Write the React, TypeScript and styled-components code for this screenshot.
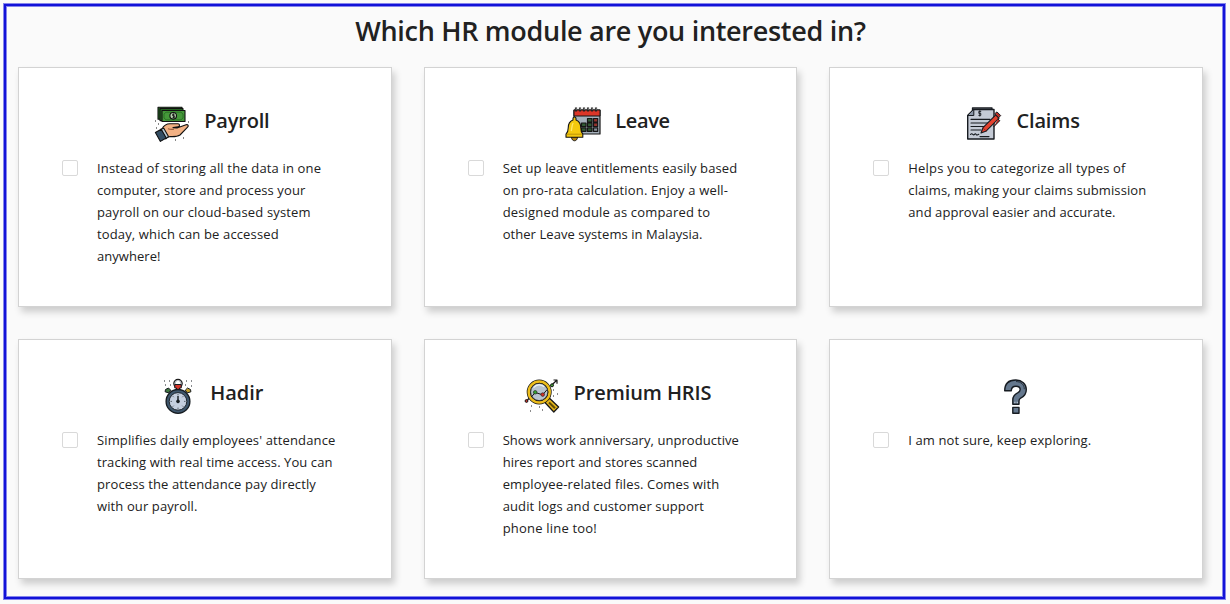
import React from "react";
import styled, { createGlobalStyle } from "styled-components";

const GlobalStyle = createGlobalStyle`
  * { box-sizing: border-box; }
  body { margin: 0; background: #fafafa; }
`;

const Page = styled.main`
  height: 604px;
  padding: 3px 4px 4px 3px;
  background: #fafafa;
  color: #212121;
  font-family: "Segoe UI", "Open Sans", "Noto Sans", sans-serif;
`;

const Frame = styled.section`
  height: 597px;
  border: 1px solid #8585ec;
  box-shadow: inset 0 0 0 2px #1212d8, inset 0 0 0 3px #8585ec;
  padding: 0 22px 0 14px;
`;

const Title = styled.h1`
  margin: 0;
  height: 63px;
  padding-top: 8px;
  text-align: center;
  font-size: 27px;
  line-height: 38px;
  font-weight: 600;
  letter-spacing: -0.3px;
`;

const Grid = styled.div`
  display: grid;
  grid-template-columns: repeat(3, 1fr);
  grid-auto-rows: 240px;
  gap: 32px;
`;

const Card = styled.article`
  background: #fff;
  border: 1px solid #d3d3d3;
  box-shadow: 3px 5px 7px rgba(0, 0, 0, 0.18);
  padding: 38px 43px 0;
`;

const CardHeader = styled.header`
  display: flex;
  justify-content: center;
  height: 51px;
  padding-left: 14px;
  gap: 14px;

  svg { width: 36px; height: 36px; flex: none; }
`;

const CardTitle = styled.h2<{ $spacing: number }>`
  margin: 0;
  padding-top: 1px;
  font-size: 20px;
  line-height: 28px;
  font-weight: 600;
  letter-spacing: ${(p) => p.$spacing}px;
`;

const Option = styled.label`
  display: flex;
  gap: 19px;
`;

const Checkbox = styled.input`
  appearance: none;
  flex: none;
  width: 16px;
  height: 16px;
  margin: 3px 0 0;
  background: #fff;
  border: 1px solid #d9d9d9;
  border-radius: 2px;
`;

const Description = styled.span`
  display: block;
  font-size: 13px;
  line-height: 22px;
`;

const Line = styled.span<{ $spacing: number }>`
  display: block;
  white-space: nowrap;
  letter-spacing: ${(p) => p.$spacing}px;
`;

const PayrollIcon = () => (
  <svg viewBox="0 0 36 36" stroke="#111" strokeWidth="1.1" strokeLinejoin="round">
    <path d="M4 1.2h24v3H7v9H4z" fill="#236b20" />
    <path d="M6 2.6h23v3H9v9H6z" fill="#2c7d27" />
    <path d="M8 4.5h23v11H8z" fill="#45983a" />
    <path d="M10 8l2-1.8h15L29 8v4l-2 1.8H12L10 12z" fill="none" stroke="#266b21" strokeWidth=".8" />
    <circle cx="19.2" cy="9.8" r="3.3" fill="#b7d3ae" />
    <path d="M20.6 8.2h-2v1.6h2v1.7h-2M19.5 7.5v4.8" fill="none" strokeWidth=".8" />
    <path d="M8 23c2-4 5-5.2 8-5.2h8c2 0 2 2.8 0 3l-5 .8 4 .4 9-3.2c2-.7 3 1 1.6 2.4L26 29c-3 2-7 1.7-10 1.6L12.2 32z" fill="#f2b184" />
    <path d="M14 22.7c2 .8 4 .8 6 .6" fill="none" stroke="#995b3b" />
    <path d="M6.8 23.2l3-1 4.7 8.2-2.7 2.4z" fill="#b8c9d4" />
    <path d="M1.4 26.4l5.8-3.2 5 8.8-5.8 3.4z" fill="#344e64" />
    <path d="M1 15h1M2 22h1M34 16h1M21 34h1M29 32h1M4 18h1" />
  </svg>
);

const LeaveIcon = () => (
  <svg viewBox="0 0 36 36" stroke="#151515" strokeLinejoin="round">
    <path d="M9 4h26v24H9z" fill="#a5b0bb" strokeWidth="1.2" />
    <path d="M9 4h26v6H9z" fill="#dc3628" strokeWidth="1" />
    <path d="M11 1.4v4M15 1.4v4M19 1.4v4M23 1.4v4M27 1.4v4M31 1.4v4" stroke="#222" strokeWidth="2.2" />
    <path d="M11.2 2v2M15.2 2v2M19.2 2v2M23.2 2v2M27.2 2v2M31.2 2v2" stroke="#aaa" strokeWidth=".7" />
    <g strokeWidth="1.2">
      <path d="M22.5 12.5H27v3.7h-4.5zM16.5 17H21v3.5h-4.5zM22.5 17H27v3.5h-4.5zM16.5 21.8H21v3.5h-4.5zM22.5 21.8H27v3.5h-4.5z" fill="#315b35" />
      <path d="M28.5 12.5h4.2v3.7h-4.2zM28.5 17h4.2v3.5h-4.2z" fill="#93332d" />
      <path d="M28.5 21.8h4.2v3.5h-4.2z" fill="#879199" />
    </g>
    <path d="M6.5 31c0 5 6 5 6 0z" fill="#b7830d" />
    <path d="M8 14v-1.6c0-1.8 3-1.8 3 0V14c3.8 1.4 4.8 4.8 4.8 8 0 3 .5 4.5 2 6.2v3H1v-3C2.7 26.5 3.2 25 3.2 22c0-3.5 1-6.7 4.8-8z" fill="#f4c90e" strokeWidth="1.1" />
    <path d="M6.2 25c.8-2 .4-5.6 2-8" fill="none" stroke="#ffe76b" strokeWidth="1.3" />
    <path d="M2 28.2h14.8" stroke="#a87d06" strokeWidth=".7" />
  </svg>
);

const ClaimsIcon = () => (
  <svg viewBox="0 0 36 36" fill="none" stroke="#171b20" strokeLinecap="round" strokeLinejoin="round">
    <path d="M6.5 2H26v27H6.5z" fill="#b9c0cc" strokeWidth="1.3" />
    <path d="M7.8 3.5H28V33H1.7V9.5z" fill="#c4cad5" strokeWidth="1.4" />
    <path d="M7.8 3.5v6H1.7z" fill="#8994a5" />
    <path d="M5 13.4h19M5 17h18M5 20.5h15M5 24h10" strokeWidth="1.1" />
    <path d="M14.8 5.4h-2v2h2v2h-2M13.8 4.6v5.5" strokeWidth=".9" />
    <path d="M4.5 28.5c2-2.5 2.5 2 4.2-.3 1.1-1.4 1.4 1.6 2.6.7l1.5-.6M14 30.6h9" strokeWidth="1.1" />
    <path d="M15 27l2-5.3L29.8 8.8l3.3 3.3-12.8 12.8z" fill="#e4412e" strokeWidth="1.1" />
    <path d="M29 7.5l2-1.6 3.7 3.7-2 2zM32 13l1.8 1.7-6 6" fill="#b92d25" />
    <path d="M17 22l3.2 3" stroke="#9c211e" strokeWidth=".9" />
  </svg>
);

const StopwatchIcon = () => (
  <svg viewBox="0 0 36 36" fill="none" stroke="#151b20" strokeLinejoin="round">
    <path d="M5.5 11.5l3-1.5 2.2 2.2-2 2.7-3.6-1.1z" fill="#3e7540" />
    <path d="M30.5 11.5l-3-1.5-2.2 2.2 2 2.7 3.6-1.1z" fill="#c19e2b" />
    <circle cx="18" cy="5.6" r="3.8" stroke="#171717" strokeWidth="2" />
    <circle cx="18" cy="5.6" r="3.3" stroke="#c5cbd2" strokeWidth="1" />
    <path d="M14.8 6.5h6.4V10h-1.7v3h-3v-3h-1.7z" fill="#d9362b" />
    <circle cx="18" cy="23.4" r="11.9" fill="#3e566c" strokeWidth="1.3" />
    <circle cx="18" cy="23.4" r="8.8" fill="#c4cfdf" strokeWidth=".9" />
    <path d="M18 16v1.4M18 29.6v1.5M10.5 23.4H12M24 23.4h1.5M12.8 18.2l1 1M22.3 27.7l1 1M23.3 18.2l-1 1M13.7 27.7l-1 1" strokeWidth=".6" />
    <path d="M18 18v5.2" strokeWidth="1.4" />
    <circle cx="18" cy="23.4" r="1.4" fill="#151b20" />
    <path d="M4 3h1M9 3h1M26 3h1M31 3h1M5 7h1M31 8h1M10 7h1M25 7h1" />
  </svg>
);

const SearchIcon = () => (
  <svg viewBox="0 0 36 36" fill="none" stroke="#181818" strokeLinejoin="round">
    <path d="M26.5 8.2L33 2M29.5 2H33v3.7M2.5 23l3.4-3.5" strokeWidth="1.2" />
    <circle cx="28" cy="7.3" r="1.5" fill="#42a439" />
    <circle cx="2.5" cy="23" r="1.4" fill="#c9342d" />
    <path d="M23 21l2.5-.7L34.6 29l-4.8 5-8.6-9.2z" fill="#e5b51b" strokeWidth="1.3" />
    <path d="M25 24.5l6 5.8" stroke="#604c08" strokeWidth="2.1" />
    <circle cx="15.2" cy="14" r="10.5" stroke="#181818" strokeWidth="4" />
    <circle cx="15.2" cy="14" r="10.5" stroke="#edbd1c" strokeWidth="2.5" />
    <circle cx="15.2" cy="14" r="8.6" fill="#b8c4d0" strokeWidth=".8" />
    <path d="M9.5 9.7c3-3.7 7-3.6 10.7-1.1" stroke="#e7eef4" strokeWidth="1.3" />
    <path d="M7.5 18.8l3.7-4.3 7.5 2.3 4.2-5" strokeWidth="1" />
    <circle cx="11.2" cy="14.3" r="1.8" fill="#36a32f" strokeWidth=".6" />
    <circle cx="18.7" cy="16.6" r="1.8" fill="#d63329" strokeWidth=".6" />
    <path d="M29 12h1M33 16h1M29 18h1M15 29h1M7 28h1M6 33h1M18 32h1" />
  </svg>
);

const QuestionIcon = () => (
  <svg viewBox="0 0 36 36" stroke="#171c22" strokeWidth="1.4" strokeLinejoin="round">
    <path d="M6.7 12.8C6.7 5.7 11 2 17.6 2c6.4 0 10.7 4 10.7 9.5 0 4.5-2.1 7-5.6 8.7-1.2.6-1.7 1.4-1.7 2.8v3.3h-6.2V22c0-3.8 1.8-5.8 4.8-7.2 1.8-.9 2.6-1.8 2.6-3.3 0-2-1.7-3.2-4.2-3.2-3 0-4.7 1.6-4.7 4.5z" fill="#65788e" />
    <path d="M14.8 29.4H21v5.8h-6.2z" fill="#65788e" />
    <path d="M18 3.5c5 .2 8.3 3.3 8.3 7.7" fill="none" stroke="#29343f" strokeWidth="1" />
    <path d="M16.5 24.5h.8M18.8 24.5h.8" stroke="#e1e8ef" strokeWidth="1.3" />
  </svg>
);

type Module = {
  title: string;
  titleSpacing: number;
  icon: React.ReactNode;
  lines: [string, number][];
};

const modules: Module[] = [
  {
    title: "Payroll", titleSpacing: -0.2, icon: <PayrollIcon />,
    lines: [["Instead of storing all the data in one", 0.16], ["computer, store and process your", 0.1], ["payroll on our cloud-based system", 0.15], ["today, which can be accessed", 0.14], ["anywhere!", 0.05]],
  },
  {
    title: "Leave", titleSpacing: -0.3, icon: <LeaveIcon />,
    lines: [["Set up leave entitlements easily based", 0.11], ["on pro-rata calculation. Enjoy a well-", 0.17], ["designed module as compared to", 0.17], ["other Leave systems in Malaysia.", 0.06]],
  },
  {
    title: "Claims", titleSpacing: -0.15, icon: <ClaimsIcon />,
    lines: [["Helps you to categorize all types of", 0.2], ["claims, making your claims submission", 0.1], ["and approval easier and accurate.", 0.06]],
  },
  {
    title: "Hadir", titleSpacing: 0, icon: <StopwatchIcon />,
    lines: [["Simplifies daily employees' attendance", 0.13], ["tracking with real time access. You can", 0.08], ["process the attendance pay directly", 0.11], ["with our payroll.", 0.11]],
  },
  {
    title: "Premium HRIS", titleSpacing: -0.1, icon: <SearchIcon />,
    lines: [["Shows work anniversary, unproductive", 0.05], ["hires report and stores scanned", 0.04], ["employee-related files. Comes with", 0.13], ["audit logs and customer support", 0.13], ["phone line too!", 0.2]],
  },
  { title: "", titleSpacing: 0, icon: <QuestionIcon />, lines: [["I am not sure, keep exploring.", 0.1]] },
];

export default function App() {
  return (
    <Page>
      <GlobalStyle />
      <Frame>
        <Title>Which HR module are you interested in?</Title>
        <Grid>
          {modules.map((m, i) => (
            <Card key={i}>
              <CardHeader>
                {m.icon}
                <CardTitle $spacing={m.titleSpacing}>{m.title}</CardTitle>
              </CardHeader>
              <Option>
                <Checkbox type="checkbox" />
                <Description>
                  {m.lines.map(([text, spacing]) => (
                    <Line key={text} $spacing={spacing}>{text}</Line>
                  ))}
                </Description>
              </Option>
            </Card>
          ))}
        </Grid>
      </Frame>
    </Page>
  );
}
